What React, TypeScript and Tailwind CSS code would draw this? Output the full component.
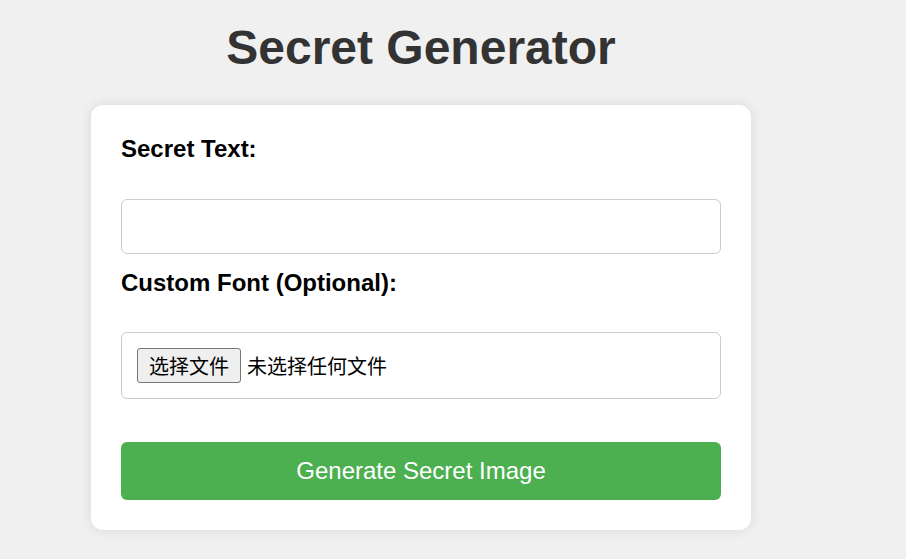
export default function App() {
  return (
    <div className="min-h-screen w-full bg-[#f0f0f0] font-['Liberation_Sans',Arial,sans-serif] overflow-hidden">
      <div className="ml-[91px] w-[660px] pt-[20px]">
        <h1 className="text-center text-[48px] leading-[normal] font-bold text-[#333]">Secret Generator</h1>

        <div className="mt-[30px] bg-white rounded-[12px] p-[30px] shadow-[0_0_12px_rgba(0,0,0,0.1)]">
          <label className="block text-[24px] leading-[normal] font-bold text-black">Secret Text:</label>
          <input
            type="text"
            className="block mt-[36px] w-full h-[55px] border border-[#ccc] rounded-[6px] px-[12px] text-[20px] outline-none"
          />

          <label className="block mt-[15px] text-[24px] leading-[normal] font-bold text-black">Custom Font (Optional):</label>
          <div className="mt-[35px] h-[67px] border border-[#ccc] rounded-[6px] px-[15px] flex items-center">
            <button className="h-[35px] px-[11px] bg-[#efefef] border border-[#767676] rounded-[3px] text-[20px] leading-none text-black font-['Noto_Sans_CJK_SC',sans-serif]">
              选择文件
            </button>
            <span className="ml-[6px] text-[20px] text-black font-['Noto_Sans_CJK_SC',sans-serif]">未选择任何文件</span>
          </div>

          <button className="block mt-[43px] w-full h-[58px] bg-[#4caf50] text-white text-[24px] rounded-[6px]">
            Generate Secret Image
          </button>
        </div>
      </div>
    </div>
  );
}
